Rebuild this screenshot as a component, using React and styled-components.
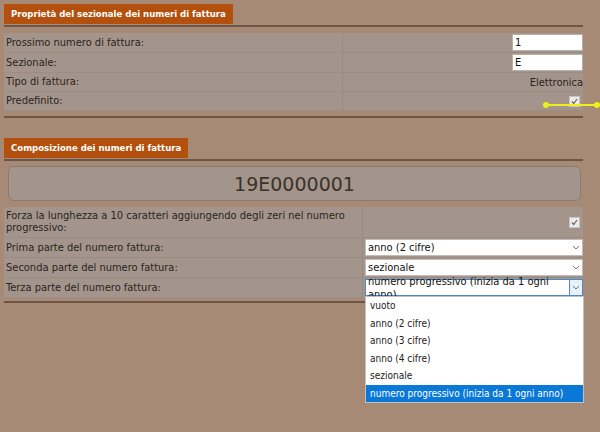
import React from 'react';
import styled, { createGlobalStyle } from 'styled-components';

const Global = createGlobalStyle`
  html, body { margin: 0; background: #a68a76; }
  body { font-family: "DejaVu Sans Condensed", "Liberation Sans", sans-serif; font-size: 11px; color: #2b2420; }
`;

const Page = styled.div`
  width: 600px;
  height: 432px;
  padding: 4px 17px 0 4px;
  box-sizing: border-box;
  position: relative;
  overflow: hidden;
`;

const Section = styled.section`
  margin-bottom: ${p => p.$gap || 0}px;
`;

const Tab = styled.div`
  display: inline-block;
  background: #b4500e;
  color: #fff;
  font-weight: bold;
  font-size: 9.5px;
  padding: 0 7px;
  height: 20px;
  line-height: 20px;
`;

const Rule = styled.div`
  height: 2px;
  background: #6e5444;
  margin-top: ${p => p.$top || 0}px;
`;

const Table = styled.div`
  margin-top: ${p => p.$top || 6}px;
  display: grid;
  grid-template-columns: ${p => p.$left}px 1fr;
  background: #a3958b;
`;

const Label = styled.div`
  padding: 2px 2px;
  min-height: ${p => p.$h || 14}px;
  display: flex;
  align-items: center;
  border-bottom: 1px solid #9a8d83;
  border-right: 1px solid #978a80;
  line-height: 12px;
`;

const Value = styled.div`
  display: flex;
  align-items: center;
  justify-content: flex-end;
  padding: 1px 0 1px 2px;
  border-bottom: 1px solid #9a8d83;
`;

const Input = styled.div`
  width: 67px;
  height: 15px;
  background: #fff;
  border: 1px solid #b9b0a8;
  padding-left: 2px;
  line-height: 15px;
  color: #111;
`;

const Check = styled.span`
  width: 9px;
  height: 9px;
  border: 1px solid #c8c4c0;
  background: #eceae8;
  margin-right: 3px;
  display: flex;
  align-items: center;
  justify-content: center;
`;

const Select = styled.div`
  flex: 1;
  height: 15px;
  background: #fff;
  border: 1px solid ${p => p.$open ? '#4a8bd0' : '#c4bcb4'};
  display: flex;
  align-items: center;
  padding-left: 2px;
  color: #111;
  position: relative;
`;

const Arrow = styled.span`
  margin-left: auto;
  width: 13px;
  height: 15px;
  display: flex;
  align-items: center;
  justify-content: center;
  border-left: ${p => p.$open ? '1px solid #4a8bd0' : 'none'};
  background: ${p => p.$open ? '#e5f1fb' : 'transparent'};
`;

const NumberBox = styled.div`
  margin: 5px 2px 2px 4px;
  height: 33px;
  border: 1px solid #8a7b70;
  border-radius: 6px;
  background: #a3958b;
  display: flex;
  align-items: center;
  justify-content: center;
  font-family: "DejaVu Sans", sans-serif;
  font-size: 19px;
  color: #3a322c;
`;

const Dropdown = styled.ul`
  position: absolute;
  left: -1px;
  top: 16px;
  width: 217px;
  margin: 0;
  padding: 0;
  list-style: none;
  background: #fff;
  border: 1px solid #c0c0c0;
  z-index: 2;
`;

const Option = styled.li`
  height: 17.5px;
  line-height: 17.5px;
  padding-left: 4px;
  font-size: 10px;
  background: ${p => p.$sel ? '#0a78d7' : '#fff'};
  color: ${p => p.$sel ? '#fff' : '#222'};
`;

const Marker = styled.div`
  position: absolute;
  left: 545px;
  top: 104px;
  width: 52px;
  height: 2px;
  background: #f2ee1a;
  &::before, &::after {
    content: '';
    position: absolute;
    top: -2px;
    width: 6px;
    height: 6px;
    border-radius: 50%;
    background: #f2ee1a;
  }
  &::before { left: -2px; }
  &::after { right: -3px; }
`;

const Chevron = () => (
  <svg width="8" height="5" viewBox="0 0 8 5"><path d="M1 1l3 3 3-3" fill="none" stroke="#777" strokeWidth="1" /></svg>
);

const Tick = () => (
  <svg width="7" height="7" viewBox="0 0 7 7"><path d="M1 3.5l1.8 2L6 1" fill="none" stroke="#666" strokeWidth="1.2" /></svg>
);

const options = ['vuoto', 'anno (2 cifre)', 'anno (3 cifre)', 'anno (4 cifre)', 'sezionale', 'numero progressivo (inizia da 1 ogni anno)'];

export default function App() {
  return (
    <Page>
      <Global />
      <Section $gap={20}>
        <Tab>Proprietà del sezionale dei numeri di fattura</Tab>
        <Rule $top={1} />
        <Table $left={339} $top={6}>
          <Label>Prossimo numero di fattura:</Label>
          <Value><Input>1</Input></Value>
          <Label>Sezionale:</Label>
          <Value><Input>E</Input></Value>
          <Label>Tipo di fattura:</Label>
          <Value>Elettronica</Value>
          <Label>Predefinito:</Label>
          <Value><Check><Tick /></Check></Value>
        </Table>
        <Rule $top={5} />
      </Section>
      <Section>
        <Tab>Composizione dei numeri di fattura</Tab>
        <Rule $top={1} />
        <NumberBox>19E0000001</NumberBox>
        <Table $left={359} $top={0}>
          <Label $h={26}>Forza la lunghezza a 10 caratteri aggiungendo degli zeri nel numero progressivo:</Label>
          <Value><Check><Tick /></Check></Value>
          <Label>Prima parte del numero fattura:</Label>
          <Value><Select>anno (2 cifre)<Arrow><Chevron /></Arrow></Select></Value>
          <Label>Seconda parte del numero fattura:</Label>
          <Value><Select>sezionale<Arrow><Chevron /></Arrow></Select></Value>
          <Label>Terza parte del numero fattura:</Label>
          <Value>
            <Select $open>
              numero progressivo (inizia da 1 ogni anno)
              <Arrow $open><Chevron /></Arrow>
              <Dropdown>
                {options.map((o, i) => <Option key={o} $sel={i === options.length - 1}>{o}</Option>)}
              </Dropdown>
            </Select>
          </Value>
        </Table>
        <Rule $top={3} />
      </Section>
      <Marker />
    </Page>
  );
}
